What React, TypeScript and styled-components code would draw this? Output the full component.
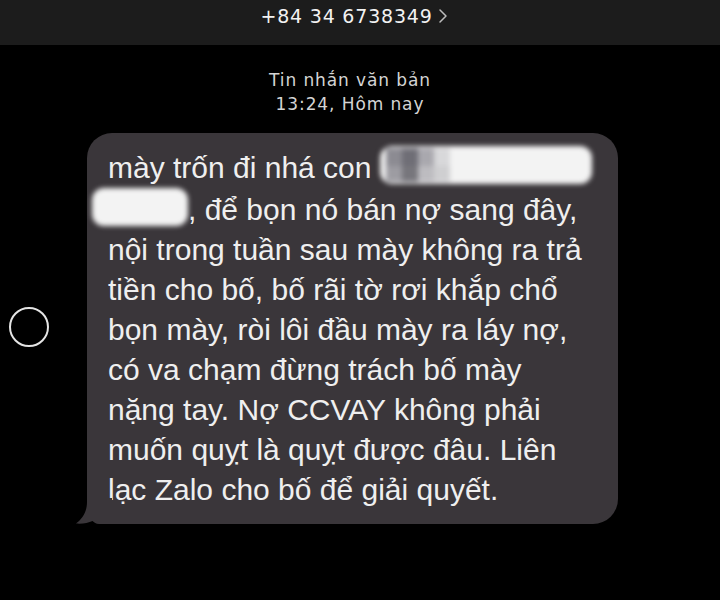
import React from "react";
import styled, { createGlobalStyle } from "styled-components";

const Global = createGlobalStyle`
  html, body { margin: 0; padding: 0; background: #000; }
  #root { min-height: 600px; }
`;

const Screen = styled.div`
  width: 720px;
  height: 600px;
  background: #000;
  display: flex;
  flex-direction: column;
  overflow: hidden;
  font-family: "Liberation Sans", Arial, sans-serif;
`;

const TopBar = styled.header`
  height: 45px;
  background: #1c1c1c;
  display: flex;
  justify-content: center;
  align-items: flex-start;
  padding: 4px 12px 0 0;
  box-sizing: border-box;
`;

const Number = styled.div`
  display: flex;
  align-items: center;
  gap: 5px;
  font-family: "DejaVu Sans", sans-serif;
  font-size: 19px;
  letter-spacing: 0.8px;
  color: #f2f2f2;
  line-height: 24px;
`;

const Meta = styled.div`
  margin-top: 23px;
  padding-right: 20px;
  display: flex;
  flex-direction: column;
  align-items: center;
  font-family: "DejaVu Sans", sans-serif;
  font-size: 17px;
  letter-spacing: 0.9px;
  line-height: 24px;
  color: #d4d4d4;
`;

const Row = styled.div`
  margin-top: 17px;
  display: flex;
  align-items: center;
  padding-left: 9px;
  gap: 38px;
`;

const Radio = styled.div`
  width: 36px;
  height: 36px;
  margin-top: -4px;
  border-radius: 50%;
  border: 2px solid #e4e4e4;
  flex: none;
`;

const Bubble = styled.div`
  position: relative;
  width: 531px;
  box-sizing: border-box;
  background: #3a363a;
  border-radius: 25px;
  padding: 13px 0 14px 21px;
  color: #efefef;
  font-size: 30px;
  line-height: 40px;
  white-space: nowrap;
`;

const Tail = styled.svg`
  position: absolute;
  left: -11px;
  bottom: 0;
  width: 36px;
  height: 26px;
`;

const Line = styled.div`
  display: block;
`;

const Blob = styled.span<{ $w: number; $shift?: number }>`
  position: relative;
  display: inline-block;
  width: ${(p) => p.$w}px;
  height: 38px;
  margin-left: ${(p) => p.$shift ?? 0}px;
  vertical-align: -6px;
  background: #f3f3f3;
  border-radius: 12px;
  filter: blur(2.5px);
  overflow: hidden;
`;

const Pixels = styled.span`
  position: absolute;
  left: 6px;
  top: 2px;
  display: grid;
  grid-template-columns: repeat(4, 16px);
  grid-template-rows: 18px 16px;
`;

const Px = styled.span<{ $c: string }>`
  background: ${(p) => p.$c};
`;

const lines: React.ReactNode[] = [
  <>
    mày trốn đi nhá con{" "}
    <Blob $w={212}>
      <Pixels>
        <Px $c="#8c8b92" />
        <Px $c="#6f6e76" />
        <Px $c="#a9a8ae" />
        <Px $c="#d8d8da" />
        <Px $c="#9d9ca2" />
        <Px $c="#77767c" />
        <Px $c="#bdbcc0" />
        <Px $c="#cfcfd1" />
      </Pixels>
    </Blob>
  </>,
  <>
    <Blob $w={96} $shift={-16} />
    , để bọn nó bán nợ sang đây,
  </>,
  "nội trong tuần sau mày không ra trả",
  "tiền cho bố, bố rãi tờ rơi khắp chổ",
  "bọn mày, ròi lôi đầu mày ra láy nợ,",
  "có va chạm đừng trách bố mày",
  "nặng tay. Nợ CCVAY không phải",
  "muốn quỵt là quỵt được đâu. Liên",
  "lạc Zalo cho bố để giải quyết.",
];

export default function App() {
  return (
    <>
      <Global />
      <Screen>
        <TopBar>
          <Number>
            +84 34 6738349
            <svg width="10" height="16" viewBox="0 0 10 16" fill="none">
              <path d="M2 2 L8 8 L2 14" stroke="#bdbdbd" strokeWidth="1.5" strokeLinecap="round" strokeLinejoin="round" />
            </svg>
          </Number>
        </TopBar>
        <Meta>
          <span>Tin nhắn văn bản</span>
          <span>13:24, Hôm nay</span>
        </Meta>
        <Row>
          <Radio />
          <Bubble>
            <Tail viewBox="0 0 36 26">
              <path
                d="M11 0 H36 V26 H23 C20 26 18 24.5 16.5 23 C12.5 25 6 26 0 25.5 C5 22 11 15 11 4 Z"
                fill="#3a363a"
              />
            </Tail>
            {lines.map((l, i) => (
              <Line key={i}>{l}</Line>
            ))}
          </Bubble>
        </Row>
      </Screen>
    </>
  );
}
